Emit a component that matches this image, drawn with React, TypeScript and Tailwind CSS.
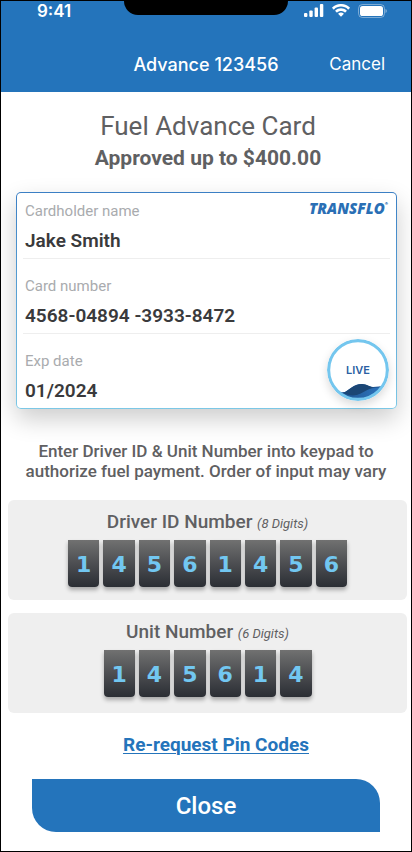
import type { ReactNode } from "react";

const driverId = "14561456";
const unitNumber = "145614";

const fields = [
  { label: "Cardholder name", value: "Jake Smith" },
  { label: "Card number", value: "4568-04894 -3933-8472" },
  { label: "Exp date", value: "01/2024" },
];

const SignalIcon = () => (
  <svg width="20" height="13" viewBox="0 0 20 13" fill="#fff" aria-hidden="true">
    <rect x="0" y="9" width="3.4" height="4" rx="1" />
    <rect x="5.3" y="6.5" width="3.4" height="6.5" rx="1" />
    <rect x="10.6" y="3.5" width="3.4" height="9.5" rx="1" />
    <rect x="15.9" y="0" width="3.4" height="13" rx="1" />
  </svg>
);

const WifiIcon = () => (
  <svg width="18" height="13" viewBox="0 0 18 13" fill="#fff" aria-hidden="true">
    <path d="M9 2.6c2.6 0 5.1 1 7 2.8.1.1.4.1.5 0l1.3-1.4c.2-.1.2-.4 0-.5C12.9-1.2 5.1-1.2.2 3.5c-.2.1-.2.4 0 .5l1.3 1.4c.1.1.4.1.5 0C3.9 3.6 6.4 2.6 9 2.6z" />
    <path d="M9 7c1.4 0 2.8.5 3.8 1.5.2.1.4.1.5 0l1.4-1.4c.1-.2.1-.4 0-.6-3.2-3-8.200-3-11.400 0-.1.2-.1.4 0 .6l1.400 1.400c.1.1.3.1.5 0C6.200 7.500 7.600 7 9 7z" />
    <path d="M11.700 10c.1-.1.1-.4 0-.5-1.600-1.300-3.800-1.300-5.400 0-.1.1-.1.4 0 .5l2.400 2.500c.2.1.4.1.6 0z" />
  </svg>
);

const BatteryIcon = () => (
  <svg width="29" height="14" viewBox="0 0 29 14" aria-hidden="true">
    <rect x="0.5" y="0.5" width="26" height="13" rx="4" fill="none" stroke="#fff" strokeOpacity="0.4" />
    <rect x="2" y="2" width="23" height="10" rx="2.6" fill="#fff" />
    <path d="M27.5 5v4c.8-.3 1.3-1.1 1.3-2s-.5-1.700-1.300-2z" fill="#fff" fillOpacity="0.45" />
  </svg>
);

const LiveBadge = () => (
  <svg
    width="62"
    height="62"
    viewBox="0 0 62 62"
    className="absolute right-[7px] bottom-[7px] rounded-full shadow-[0_4px_10px_rgba(0,0,0,0.15)]"
  >
    <defs>
      <clipPath id="badge">
        <circle cx="31" cy="31" r="28.5" />
      </clipPath>
      <linearGradient id="wave" x1="0" y1="0" x2="1" y2="0">
        <stop offset="0" stopColor="#1d4f88" />
        <stop offset="1" stopColor="#2f78c4" />
      </linearGradient>
    </defs>
    <circle cx="31" cy="31" r="30" fill="#fff" />
    <g clipPath="url(#badge)">
      <path d="M0 48c6 1 9 6 18 5 5-3 9-8 17-8 4 0 7 3 11 3 5 0 9-2 16-1v15H0z" fill="#205a9b" />
      <path d="M16 54c6-2 10-9 19-9 5 0 8 3 13 4-6 1-11 6-18 7-5 1-10 0-14-2z" fill="#1b4675" />
      <path d="M4 50c5 4 11 7 19 7 12 0 16-8 25-8 5 0 9-2 14-2v15H4z" fill="url(#wave)" />
    </g>
    <circle cx="31" cy="31" r="29.4" fill="none" stroke="#74c6ee" strokeWidth="3.2" />
    <text x="31" y="35" textAnchor="middle" fontSize="11" className="fill-[#2b5fa3] font-['Inter'] font-semibold">
      LIVE
    </text>
  </svg>
);

const Digits = ({ value, className }: { value: string; className: string }) => (
  <div className={`mx-auto grid gap-1 ${className}`}>
    {value.split("").map((digit, i) => (
      <span
        key={i}
        className="flex h-[47px] items-center justify-center rounded-b bg-linear-to-b from-[#717171] to-[#2b2e34] pt-0.5 font-['DejaVu_Sans',sans-serif] text-[22px] font-bold text-[#72c7f1] shadow-[0_3px_4px_rgba(0,0,0,0.3)]"
      >
        {digit}
      </span>
    ))}
  </div>
);

type PanelProps = { title: string; hint: string; className: string; children: ReactNode };

const Panel = ({ title, hint, className, children }: PanelProps) => (
  <section className={`mr-1 ml-[7px] h-[100px] rounded-md bg-[#efefef] ${className}`}>
    <h2 className="pb-1 text-center text-[19px] leading-7 font-medium">
      {title} <span className="text-[13px] leading-none font-normal italic">{hint}</span>
    </h2>
    {children}
  </section>
);

const App = () => {
  return (
    <div className="flex min-h-screen flex-col border border-black bg-white font-['Roboto',sans-serif] text-[#5f6062]">
      <header className="bg-[#2474bb] font-['Inter',sans-serif] text-white">
        <div className="flex h-[17px] justify-between">
          <div className="w-[30%] pl-9 text-[17px] leading-5 font-semibold">9:41</div>
          <div className="h-[14px] w-[164px] rounded-b-[14px] bg-black" />
          <div className="flex flex-1 items-center justify-end gap-2 pt-0.5 pr-6">
            <SignalIcon />
            <WifiIcon />
            <BatteryIcon />
          </div>
        </div>
        <div className="grid h-[74px] grid-cols-[1fr_auto_1fr] items-center pt-5">
          <h1 className="col-start-2 text-lg font-medium">Advance 123456</h1>
          <button type="button" className="mr-[26px] justify-self-end text-[17px]">
            Cancel
          </button>
        </div>
      </header>

      <main className="flex flex-col">
        <div className="pt-[18px] text-center">
          <p className="ml-1 text-[26px] leading-8">Fuel Advance Card</p>
          <p className="ml-1 text-[21px] leading-8 font-bold">Approved up to $400.00</p>
        </div>

        <div className="mr-[14px] ml-[15px] mt-[18px] rounded-[5px] bg-linear-to-b from-[#3b7fc4] to-[#7cc8e6] p-px shadow-[0_10px_24px_rgba(0,0,0,0.2)]">
          <div className="relative rounded bg-white px-1.5">
            <dl>
              {fields.map(({ label, value }) => (
                <div
                  key={label}
                  className="border-b border-[#eeeeee] px-0.5 pt-[17px] pb-[7px] first:pt-2 last:border-b-0"
                >
                  <dt className="text-[15px] leading-5 text-[#a9abae]">{label}</dt>
                  <dd className="mt-2.5 text-[19px] leading-5 font-semibold text-[#3a3a3c]">{value}</dd>
                </div>
              ))}
            </dl>
            <span className="absolute top-1.5 right-2 flex items-start font-['Open_Sans',sans-serif] text-[15px] leading-[18px] font-extrabold text-[#2a6fb5] italic">
              TRANSFLO
              <span className="text-[4px] leading-[10px] not-italic">®</span>
            </span>
            <LiveBadge />
          </div>
        </div>

        <p className="mt-8 mb-[19px] px-4 text-center text-[17px] leading-5 font-medium">
          Enter Driver ID &amp; Unit Number into keypad to authorize fuel payment. Order of input may vary
        </p>

        <Panel title="Driver ID Number" hint="(8 Digits)" className="pt-2">
          <Digits value={driverId} className="w-[279px] grid-cols-8" />
        </Panel>
        <Panel title="Unit Number" hint="(6 Digits)" className="mt-[13px] pt-[5px]">
          <Digits value={unitNumber} className="w-[208px] grid-cols-6" />
        </Panel>

        <a
          href="#pin-codes"
          className="mt-5 ml-5 self-center text-[19px] leading-6 font-bold text-[#2474bb] underline decoration-1 underline-offset-2"
        >
          Re-request Pin Codes
        </a>
        <button
          type="button"
          className="mx-[31px] mt-[22px] mb-[19px] h-[53px] rounded-tr-3xl rounded-bl-3xl bg-[#2474bb] text-2xl font-medium text-white"
        >
          Close
        </button>
      </main>
    </div>
  );
};

export default App;
